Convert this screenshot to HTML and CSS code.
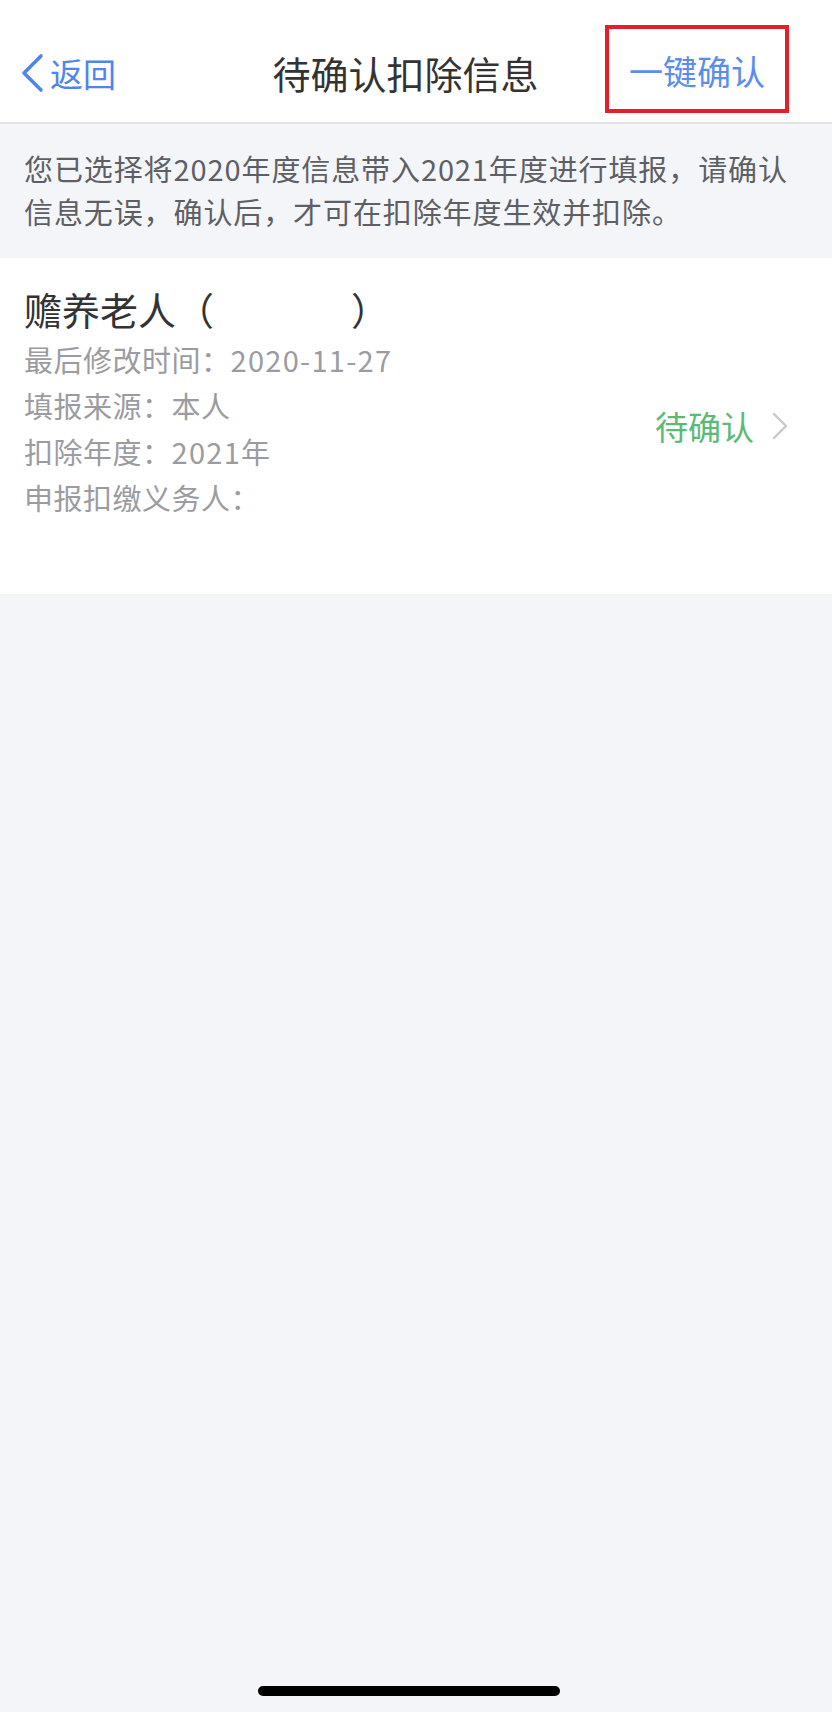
FILE: index.html
```html
<!DOCTYPE html>
<html lang="zh-CN">
<head>
<meta charset="utf-8">
<title>待确认扣除信息</title>
<link rel="stylesheet" href="styles.css">
</head>
<body>
<div class="screen">
  <header class="nav">
    <a class="nav-back">
      <svg class="back-icon" width="24" height="40" viewBox="0 0 24 40"><path d="M21 3 L4 20 L21 37" fill="none" stroke="#4f86ed" stroke-width="3.6" stroke-linecap="round" stroke-linejoin="round"/></svg>
      <span>返回</span>
    </a>
    <h1 class="nav-title">待确认扣除信息</h1>
    <div class="nav-action"><span>一键确认</span></div>
  </header>

  <p class="notice">您已选择将2020年度信息带入2021年度进行填报，请确认<br>信息无误，确认后，才可在扣除年度生效并扣除。</p>

  <section class="card">
    <div class="card-main">
      <div class="card-title">赡养老人（<span class="redacted"></span>）</div>
      <div class="card-rows">
        <div class="row">最后修改时间：<span class="num">2020-11-27</span></div>
        <div class="row">填报来源：本人</div>
        <div class="row">扣除年度：<span class="num">2021</span>年</div>
        <div class="row">申报扣缴义务人：</div>
        <div class="row"></div>
      </div>
    </div>
    <div class="card-status">
      <span>待确认</span>
      <svg width="16" height="28" viewBox="0 0 16 28"><path d="M2 2 L14 14 L2 26" fill="none" stroke="#c9c9cd" stroke-width="2.4" stroke-linecap="round" stroke-linejoin="round"/></svg>
    </div>
  </section>

  <div class="spacer"></div>
  <div class="home-bar"></div>
</div>
</body>
</html>
```

FILE: styles.css
```css
* { box-sizing: border-box; }
html, body { margin: 0; padding: 0; }
body {
  background: #f4f5f9;
  font-family: "Noto Sans CJK SC", "Noto Sans", sans-serif;
}
.screen {
  width: 832px;
  min-height: 1712px;
  display: flex;
  flex-direction: column;
}
.nav {
  background: #fff;
  height: 124px;
  border-bottom: 2px solid #e1e2e4;
  padding: 24px 43px 0 20px;
  display: grid;
  grid-template-columns: 1fr auto 1fr;
  align-items: center;
}
.nav-back {
  display: flex;
  align-items: center;
  gap: 6px;
  color: #4f86ed;
  font-size: 33px;
  line-height: 40px;
  justify-self: start;
}
.back-icon { display: block; }
.nav-title {
  margin: 0;
  font-size: 38px;
  font-weight: 400;
  line-height: 46px;
  color: #333;
  padding-left: 2px;
}
.nav-action {
  justify-self: end;
  width: 184px;
  height: 88px;
  margin-top: -8px;
  border: 4.5px solid #e3202a;
  display: flex;
  align-items: center;
  justify-content: center;
  padding-top: 4px;
  color: #5b8ded;
  font-size: 34px;
  line-height: 40px;
}
.notice {
  margin: 0;
  padding: 23px 24px 25px 24px;
  font-size: 29px;
  line-height: 43px;
  color: #5e5f64;
  letter-spacing: 0.9px;
}
.card {
  background: #fff;
  height: 336px;
  padding: 28px 44px 28px 24px;
  display: flex;
  align-items: center;
}
.card-main {
  flex: 1;
  align-self: stretch;
}
.card-title {
  font-size: 38px;
  line-height: 46px;
  color: #333;
  white-space: nowrap;
}
.redacted {
  display: inline-block;
  width: 137px;
}
.card-rows {
  margin-top: 4px;
}
.row {
  font-size: 29px;
  line-height: 46px;
  height: 46px;
  color: #9b9ca1;
  letter-spacing: 0.5px;
}
.num {
  letter-spacing: 1.3px;
}
.card-status {
  display: flex;
  align-items: center;
  gap: 18px;
  color: #5bba78;
  font-size: 33px;
  line-height: 40px;
}
.card-status svg { display: block; }
.spacer { flex: 1; }
.home-bar {
  align-self: center;
  width: 302px;
  height: 10px;
  border-radius: 5px;
  background: #000;
  margin: 0 14px 16px 0;
}
```
